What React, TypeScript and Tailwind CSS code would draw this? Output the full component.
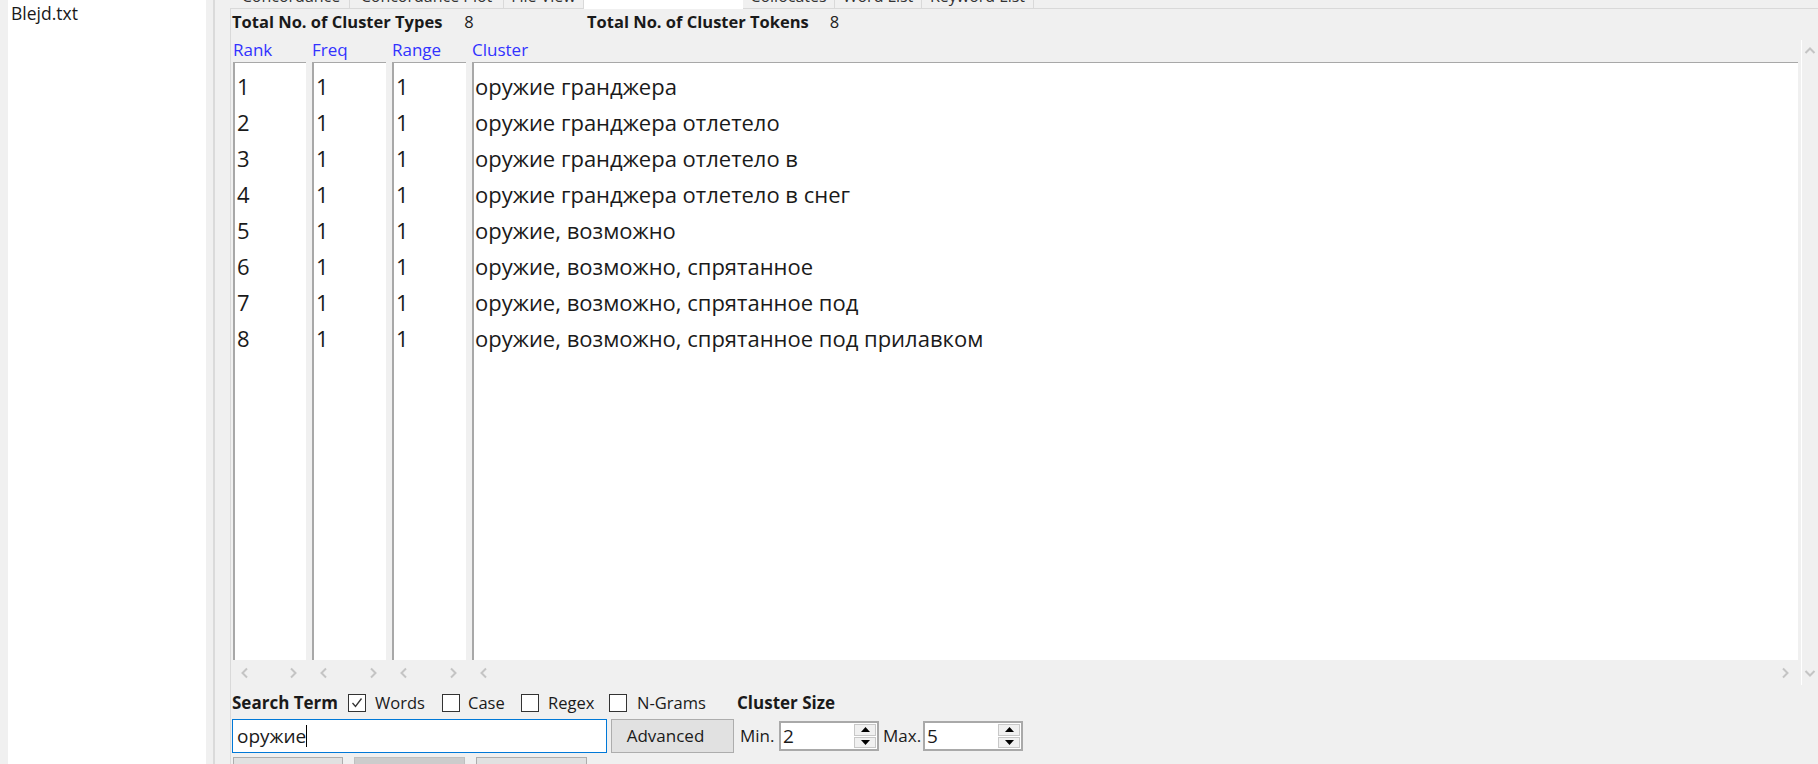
import React from "react";

const rows = [
  "оружие гранджера",
  "оружие гранджера отлетело",
  "оружие гранджера отлетело в",
  "оружие гранджера отлетело в снег",
  "оружие, возможно",
  "оружие, возможно, спрятанное",
  "оружие, возможно, спрятанное под",
  "оружие, возможно, спрятанное под прилавком",
];

function Chev({ dir }: { dir: "l" | "r" | "u" | "d" }) {
  const pts = {
    l: "7,1.5 2.5,6 7,10.5",
    r: "3,1.5 7.5,6 3,10.5",
    u: "1.5,8 6,3.5 10.5,8",
    d: "1.5,4 6,8.5 10.5,4",
  }[dir];
  return (
    <svg width="12" height="12" viewBox="0 0 12 12" className="block">
      <polyline points={pts} fill="none" stroke="#c4c4c4" strokeWidth="2" />
    </svg>
  );
}

function Check({ checked }: { checked?: boolean }) {
  return (
    <div className="w-[18px] h-[18px] border border-[#333333] bg-white flex items-center justify-center">
      {checked && (
        <svg width="14" height="14" viewBox="0 0 14 14" className="block">
          <polyline points="2.5,7 5.5,10.5 11.5,2.5" fill="none" stroke="#333333" strokeWidth="1.3" />
        </svg>
      )}
    </div>
  );
}

function Spin({ value }: { value: string }) {
  return (
    <div className="w-[100px] h-[30px] border-2 border-[#a9a9a9] bg-white flex items-stretch">
      <div className="flex-1 pl-[2px] text-[19px] leading-[26px] text-[#1a1a1a]">{value}</div>
      <div className="w-[23px] flex flex-col gap-[1px] py-[1px] pr-[1px]">
        <div className="flex-1 bg-[#f0f0f0] border border-[#c8c8c8] flex items-center justify-center">
          <svg width="9" height="5" viewBox="0 0 9 5" className="block">
            <polygon points="0,5 4.5,0 9,5" fill="#000" />
          </svg>
        </div>
        <div className="flex-1 bg-[#f0f0f0] border border-[#c8c8c8] flex items-center justify-center">
          <svg width="9" height="5" viewBox="0 0 9 5" className="block">
            <polygon points="0,0 4.5,5 9,0" fill="#000" />
          </svg>
        </div>
      </div>
    </div>
  );
}

const tabs: { label: string; w: string; sel?: boolean }[] = [
  { label: "Concordance", w: "w-[117px]" },
  { label: "Concordance Plot", w: "w-[154px]" },
  { label: "File View", w: "w-[80px]" },
  { label: "Clusters/N-Grams", w: "w-[159px]", sel: true },
  { label: "Collocates", w: "w-[92px]" },
  { label: "Word List", w: "w-[87px]" },
  { label: "Keyword List", w: "w-[112px]" },
];

function Column({ items, cluster }: { items: string[]; cluster?: boolean }) {
  return (
    <div className="bg-white border-t border-l-2 border-[#a8a8a8] pt-[5px] overflow-hidden">
      {items.map((t, i) => (
        <div
          key={i}
          className={`h-[36px] leading-[36px] text-[22px] text-[#1a1a1a] whitespace-nowrap ${cluster ? "pl-[1px]" : "pl-[2px]"}`}
        >
          {t}
        </div>
      ))}
    </div>
  );
}

export default function App() {
  const nums = rows.map((_, i) => String(i + 1));
  const ones = rows.map(() => "1");
  return (
    <div className="w-[1818px] h-[764px] overflow-hidden bg-[#f0f0f0] flex pl-[8px] font-['Open_Sans',sans-serif] text-[#1a1a1a]">
      {/* left file list */}
      <div className="w-[198px] h-full bg-white pl-[3px] pt-[1px]">
        <div className="text-[17.5px] leading-[24px] text-[#1a1a1a]">Blejd.txt</div>
      </div>
      <div className="w-[7px]" />
      <div className="w-[2px] h-full bg-[#dadada]" />
      <div className="w-[15px]" />

      {/* right tab area */}
      <div className="flex-1 min-w-0 flex flex-col">
        {/* tab strip */}
        <div className="h-[9px] flex shrink-0">
          <div className="w-[3px] border-b border-[#d9d9d9]" />
          {tabs.map((t) => (
            <div
              key={t.label}
              className={`${t.w} h-[9px] overflow-hidden text-center text-[16px] leading-[20px] ${
                t.sel
                  ? "bg-white"
                  : "bg-[#f0f0f0] border-r border-b border-[#d9d9d9] text-[#333333]"
              }`}
            >
              <div className={t.sel ? "mt-[-18px]" : "mt-[-14px]"}>{t.label}</div>
            </div>
          ))}
          <div className="flex-1 border-b border-[#d9d9d9]" />
        </div>

        {/* tab panel */}
        <div className="flex-1 border-l border-[#d9d9d9] flex flex-col">
          {/* totals */}
          <div className="mt-[3px] h-[20px] flex items-center pl-[1px] text-[16.5px] leading-[20px] whitespace-nowrap">
            <div className="w-[355px] flex">
              <span className="font-bold">Total No. of Cluster Types</span>
              <span className="ml-[22px] text-[#222]">8</span>
            </div>
            <span className="font-bold">Total No. of Cluster Tokens</span>
            <span className="ml-[21px] text-[#222]">8</span>
          </div>

          {/* results area */}
          <div className="mt-[8px] flex pl-[2px]">
            <div className="flex-1 min-w-0 grid grid-cols-[73px_74px_74px_1fr] grid-rows-[22px_598px_25px] gap-x-[6px]">
              {["Rank", "Freq", "Range", "Cluster"].map((h) => (
                <div key={h} className="text-[17px] leading-[20px] text-[#3232ff]">
                  {h}
                </div>
              ))}
              <Column items={nums} />
              <Column items={ones} />
              <Column items={ones} />
              <Column items={rows} cluster />
              {[0, 1, 2, 3].map((i) => (
                <div key={i} className="flex items-center justify-between pl-[7px] pr-[6px]">
                  <Chev dir="l" />
                  <Chev dir="r" />
                </div>
              ))}
            </div>
            <div className="w-[17px] ml-[3px] border-l border-white flex flex-col justify-between items-center">
              <div className="h-[22px] flex items-center">
                <Chev dir="u" />
              </div>
              <div className="h-[25px] flex items-center">
                <Chev dir="d" />
              </div>
            </div>
          </div>

          {/* search options */}
          <div className="mt-[7px] h-[22px] flex items-center pl-[1px] text-[16.5px] leading-[20px] whitespace-nowrap">
            <div className="w-[116px] font-bold text-[17px]">Search Term</div>
            <div className="w-[27px]">
              <Check checked />
            </div>
            <div className="w-[67px]">Words</div>
            <div className="w-[26px]">
              <Check />
            </div>
            <div className="w-[53px]">Case</div>
            <div className="w-[27px]">
              <Check />
            </div>
            <div className="w-[61px]">Regex</div>
            <div className="w-[28px]">
              <Check />
            </div>
            <div className="w-[100px]">N-Grams</div>
            <div className="font-bold text-[17px]">Cluster Size</div>
          </div>

          {/* search input row */}
          <div className="mt-[5px] h-[34px] flex items-center pl-[1px] whitespace-nowrap">
            <div className="w-[375px] h-[34px] border border-[#0078d7] bg-white pl-[4px] flex items-center text-[19px] leading-[26px]">
              <span>оружие</span>
              <span className="inline-block w-px h-[22px] bg-black" />
            </div>
            <div className="ml-[4px] w-[123px] h-[34px] bg-[#e1e1e1] border border-[#adadad] flex items-center justify-center pr-[14px] text-[17px]">
              Advanced
            </div>
            <div className="ml-[6px] w-[39px] text-[17px]">Min.</div>
            <Spin value="2" />
            <div className="ml-[4px] w-[40px] text-[17px]">Max.</div>
            <Spin value="5" />
          </div>

          {/* bottom buttons */}
          <div className="mt-[4px] flex gap-[11px] pl-[2px]">
            <div className="w-[110px] h-[34px] bg-[#e1e1e1] border border-[#adadad]" />
            <div className="w-[111px] h-[34px] bg-[#cccccc] border border-[#bfbfbf]" />
            <div className="w-[111px] h-[34px] bg-[#e1e1e1] border border-[#adadad]" />
          </div>
        </div>
      </div>
    </div>
  );
}
